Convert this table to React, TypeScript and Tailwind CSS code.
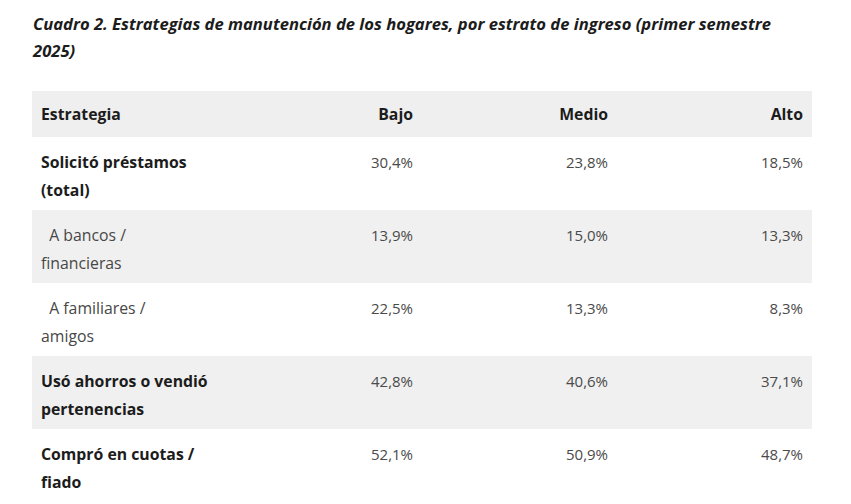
const rows = [
  { label: ["Solicitó préstamos", "(total)"], bold: true, shade: false, values: ["30,4%", "23,8%", "18,5%"] },
  { label: ["\u00a0\u00a0A bancos /", "financieras"], bold: false, shade: true, values: ["13,9%", "15,0%", "13,3%"] },
  { label: ["\u00a0\u00a0A familiares /", "amigos"], bold: false, shade: false, values: ["22,5%", "13,3%", "8,3%"] },
  { label: ["Usó ahorros o vendió", "pertenencias"], bold: true, shade: true, values: ["42,8%", "40,6%", "37,1%"] },
  { label: ["Compró en cuotas /", "fiado"], bold: true, shade: false, values: ["52,1%", "50,9%", "48,7%"] },
];

export default function App() {
  return (
    <div
      className="min-h-screen bg-white pl-[32px] pt-[10px] text-[#1c1c1c]"
      style={{ fontFamily: '"Open Sans", "Noto Sans", sans-serif' }}
    >
      {/* Title */}
      <h1 className="pl-px text-[16.6px] leading-[27px] font-bold italic">
        Cuadro 2. Estrategias de manutención de los hogares, por estrato de ingreso (primer semestre
        <br />
        2025)
      </h1>

      {/* Table */}
      <table className="mt-[27px] w-[780px] table-fixed border-collapse">
        <colgroup>
          <col className="w-[195px]" />
          <col className="w-[195px]" />
          <col className="w-[195px]" />
          <col className="w-[195px]" />
        </colgroup>
        <thead>
          <tr className="bg-[#efefef] text-[15.8px]">
            <th className="h-[46px] px-[9px] pt-px text-left font-bold leading-[27px]">Estrategia</th>
            <th className="px-[9px] pt-px text-right font-bold leading-[27px]">Bajo</th>
            <th className="px-[9px] pt-px text-right font-bold leading-[27px]">Medio</th>
            <th className="px-[9px] pt-px text-right font-bold leading-[27px]">Alto</th>
          </tr>
        </thead>
        <tbody>
          {rows.map((row) => (
            <tr key={row.label.join(" ")} className={row.shade ? "bg-[#f0f0f0]" : "bg-white"}>
              <td
                className={`px-[9px] pt-[11px] pb-[6px] align-top text-[15.8px] leading-[28px] ${
                  row.bold ? "font-bold text-[#1c1c1c]" : "text-[#474747]"
                }`}
              >
                {row.label[0]}
                <br />
                {row.label[1]}
              </td>
              {row.values.map((v, i) => (
                <td
                  key={i}
                  className="px-[9px] pt-[11px] pb-[6px] align-top text-right text-[15px] leading-[28px] text-[#4a4a4a]"
                >
                  {v}
                </td>
              ))}
            </tr>
          ))}
        </tbody>
      </table>
    </div>
  );
}
